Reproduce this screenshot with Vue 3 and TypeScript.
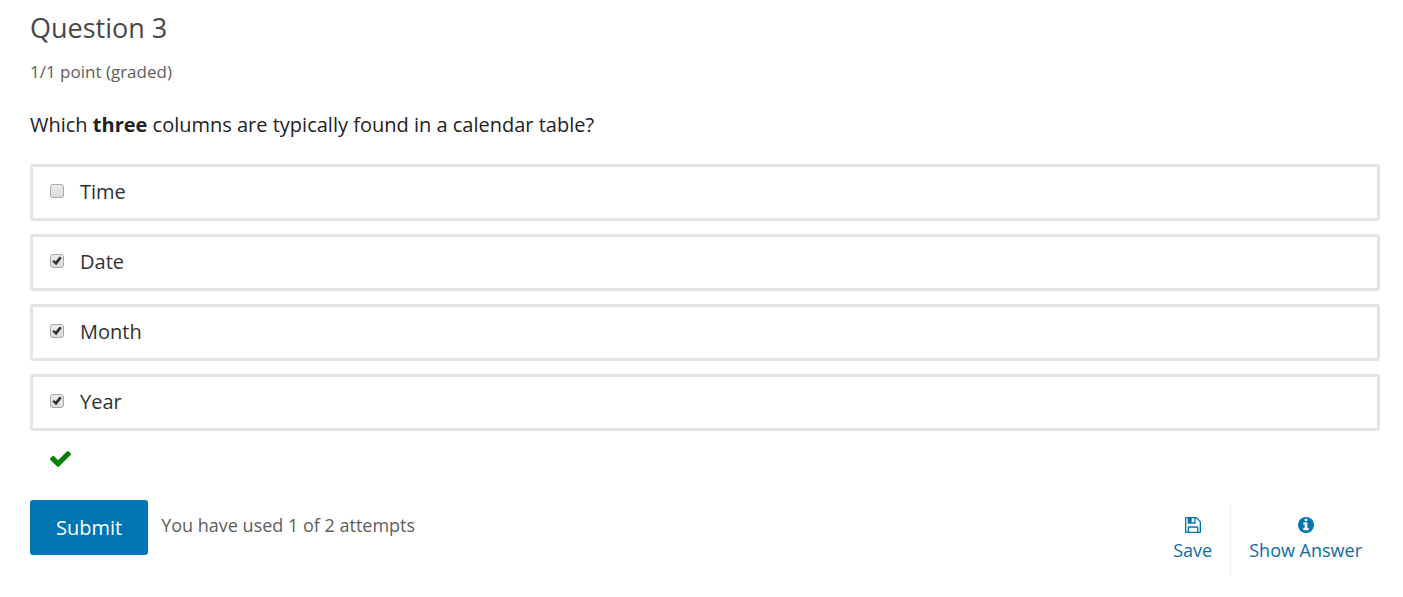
<script setup lang="ts">
import { ref } from 'vue'

interface Choice {
  id: string
  label: string
  checked: boolean
}

const choices = ref<Choice[]>([
  { id: 'choice-time', label: 'Time', checked: false },
  { id: 'choice-date', label: 'Date', checked: true },
  { id: 'choice-month', label: 'Month', checked: true },
  { id: 'choice-year', label: 'Year', checked: true },
])
</script>

<template>
  <main class="problem">
    <h3 class="title">Question 3</h3>
    <p class="progress">1/1 point (graded)</p>
    <form @submit.prevent>
      <p id="prompt" class="prompt">Which <strong>three</strong> columns are typically found in a calendar table?</p>
      <div class="choices" role="group" aria-labelledby="prompt">
        <label v-for="choice in choices" :key="choice.id" class="choice" :for="choice.id">
          <span class="box">
            <input :id="choice.id" v-model="choice.checked" type="checkbox" />
            <svg v-if="choice.checked" class="tick" viewBox="0 0 14 14" aria-hidden="true">
              <path d="M2.3 7.6 4.1 6.1 5.6 7.6 9.6 2.5 11.8 3.9 6.2 11.3Z" />
            </svg>
          </span>
          <span>{{ choice.label }}</span>
        </label>
      </div>
      <div class="status">
        <svg class="correct" viewBox="121 334 1550 1188" role="img" aria-label="Correct">
          <path d="M1671 566q0 40-28 68l-724 724-136 136q-28 28-68 28t-68-28l-136-136-362-362q-28-28-28-68t28-68l136-136q28-28 68-28t68 28l294 295 656-657q28-28 68-28t68 28l136 136q28 28 28 68z" />
        </svg>
      </div>
      <div class="actions">
        <button class="submit" type="submit">Submit</button>
        <span class="attempts">You have used 1 of 2 attempts</span>
        <div class="tools">
          <button class="tool" type="button">
            <svg class="icon" viewBox="128 128 1536 1536" aria-hidden="true">
              <path d="M512 1536h768v-384h-768v384zm896 0h128v-896q0-14-10-38.5t-20-34.5l-281-281q-10-10-34-20t-39-10v416q0 40-28 68t-68 28h-576q-40 0-68-28t-28-68v-416h-128v1280h128v-416q0-40 28-68t68-28h832q40 0 68 28t28 68v416zm-384-928v-320q0-13-9.5-22.5t-22.5-9.5h-192q-13 0-22.5 9.5t-9.5 22.5v320q0 13 9.5 22.5t22.5 9.5h192q13 0 22.5-9.5t9.5-22.5zm640 32v928q0 40-28 68t-68 28h-1344q-40 0-68-28t-28-68v-1344q0-40 28-68t68-28h928q40 0 88 20t76 48l280 280q28 28 48 76t20 88z" />
            </svg>
            <span>Save</span>
          </button>
          <button class="tool" type="button">
            <svg class="icon" viewBox="128 128 1536 1536" aria-hidden="true">
              <path d="M1152 1376v-160q0-14-9-23t-23-9h-96v-512q0-14-9-23t-23-9h-320q-14 0-23 9t-9 23v160q0 14 9 23t23 9h96v320h-96q-14 0-23 9t-9 23v160q0 14 9 23t23 9h448q14 0 23-9t9-23zm-128-896v-160q0-14-9-23t-23-9h-192q-14 0-23 9t-9 23v160q0 14 9 23t23 9h192q14 0 23-9t9-23zm640 416q0 209-103 385.5t-279.5 279.5-385.5 103-385.5-103-279.5-279.5-103-385.5 103-385.5 279.5-279.5 385.5-103 385.5 103 279.5 279.5 103 385.5z" />
            </svg>
            <span>Show Answer</span>
          </button>
        </div>
      </div>
    </form>
  </main>
</template>

<style>
body {
  background: #fff;
}
</style>

<style scoped>
.problem {
  padding: 12px 23px 20px 30px;
  font-family: "Open Sans", "Noto Sans", sans-serif;
  color: #313131;
}
.title {
  margin: 0;
  font-size: 27px;
  line-height: 32px;
  font-weight: 400;
  color: #474747;
}
.progress {
  margin: 16px 0 0;
  font-size: 17px;
  line-height: 24px;
  color: #5e5e5e;
}
.prompt {
  margin: 27px 0 0;
  font-size: 20px;
  line-height: 28px;
  color: #222;
}
.prompt strong {
  font-weight: 700;
}
.choices {
  display: grid;
  gap: 13px;
  margin-top: 25px;
}
.choice {
  display: flex;
  align-items: center;
  gap: 16px;
  border: 3px solid #e4e4e4;
  border-radius: 3px;
  padding: 11px 17px 12px;
  font-size: 20px;
  line-height: 28px;
  cursor: pointer;
}
.box {
  display: grid;
  margin-bottom: 3px;
}
.box > * {
  grid-area: 1 / 1;
  width: 14px;
  height: 14px;
}
.box input {
  appearance: none;
  box-sizing: border-box;
  margin: 0;
  border: 1px solid #a9a9a9;
  border-radius: 3px;
  background: linear-gradient(#ececec, #dcdcdc);
}
.tick {
  fill: #333;
  pointer-events: none;
}
.status {
  padding: 20px 20px 0;
}
.correct {
  display: block;
  width: 21px;
  height: 16px;
  fill: #008100;
}
.actions {
  display: flex;
  align-items: flex-start;
  margin-top: 33px;
}
button {
  font-family: inherit;
  cursor: pointer;
}
.submit {
  border: 0;
  border-radius: 3px;
  padding: 14px 26px 13px;
  background: #0075b4;
  color: #fff;
  font-size: 20px;
  line-height: 28px;
}
.attempts {
  margin: 13px 0 0 13px;
  font-size: 18px;
  line-height: 24px;
  color: #5e5e5e;
}
.tools {
  display: flex;
  margin: 4px 0 0 auto;
}
.tool {
  display: flex;
  flex-direction: column;
  align-items: center;
  gap: 5px;
  border: 0;
  padding: 13px 18px 14px;
  background: none;
  color: #0d6aa8;
  font-size: 18px;
  line-height: 24px;
}
.tool + .tool {
  border-left: 1px solid #eee;
}
.icon {
  width: 16px;
  height: 16px;
  fill: #0075b4;
}
</style>
